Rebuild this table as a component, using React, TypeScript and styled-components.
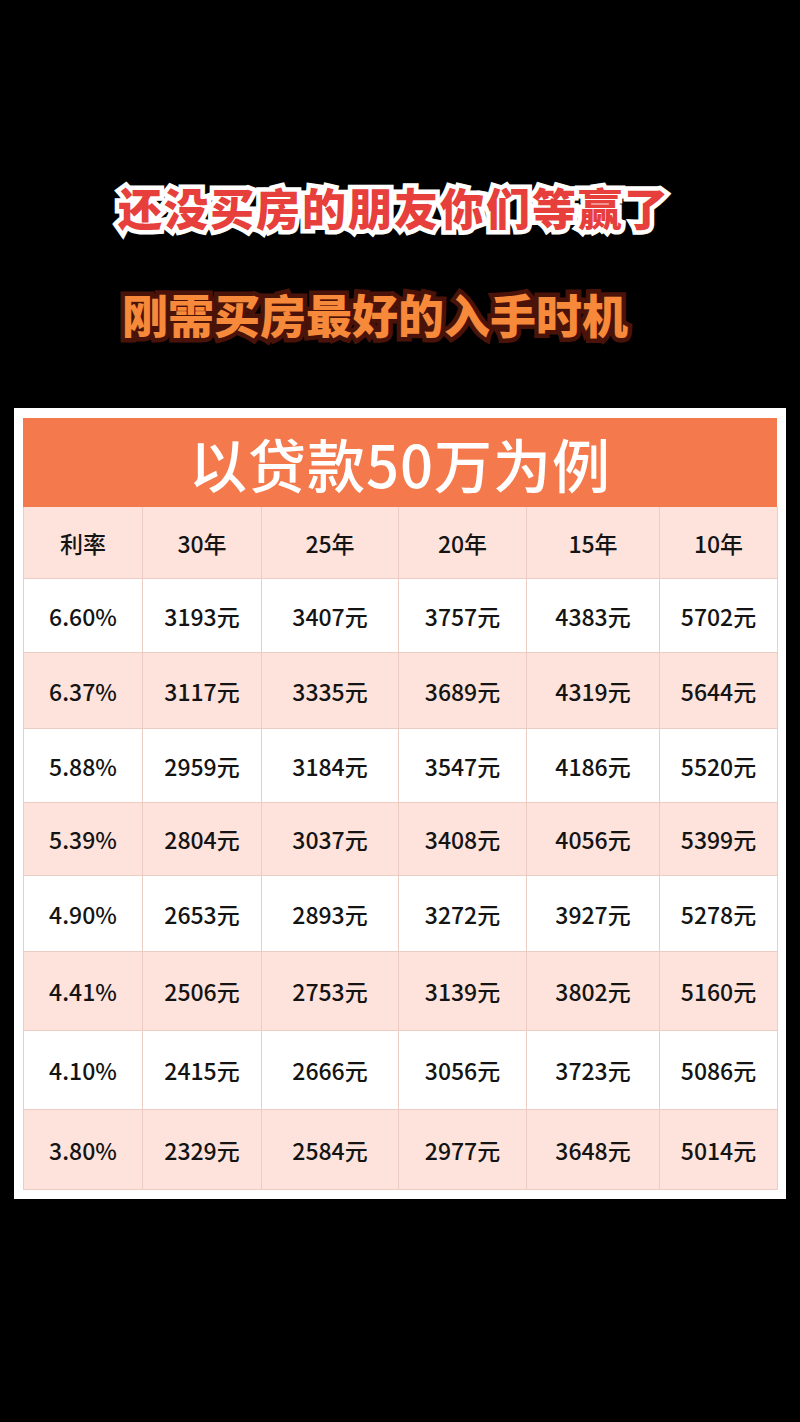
import React from 'react';
import styled, { createGlobalStyle } from 'styled-components';

const GlobalStyle = createGlobalStyle`
  html, body {
    margin: 0;
    padding: 0;
    background: #000;
  }
  body {
    font-family: "Noto Sans CJK SC", "Noto Sans", sans-serif;
  }
`;

const Page = styled.div`
  width: 800px;
  height: 1422px;
  background: #000;
  display: flex;
  flex-direction: column;
`;

const Titles = styled.div`
  padding: 176px 0 0 118px;
  height: 408px;
  box-sizing: border-box;
  display: flex;
  flex-direction: column;
  gap: 44px;
`;

const Title = styled.div<{ $fill: string; $stroke: string; $size: number; $gap: number; $indent: number }>`
  font-size: ${(p) => p.$size}px;
  font-weight: 900;
  line-height: 62px;
  letter-spacing: ${(p) => p.$gap}px;
  padding-left: ${(p) => p.$indent}px;
  color: ${(p) => p.$fill};
  -webkit-text-stroke: 9px ${(p) => p.$stroke};
  paint-order: stroke fill;
  white-space: nowrap;
`;

const Panel = styled.div`
  margin: 0 14px;
  background: #fff;
  padding: 10px 9px 9px;
`;

const Banner = styled.div`
  height: 89px;
  background: #f47a4d;
  color: #fff;
  font-size: 58px;
  font-weight: 500;
  display: flex;
  align-items: center;
  justify-content: center;
  letter-spacing: 1px;
`;

const Grid = styled.div`
  display: grid;
  grid-template-columns: 119px 119px 137px 128px 133px 118px;
  border-left: 1px solid #ecccc3;
`;

const Cell = styled.div<{ $pink: boolean; $h: number }>`
  height: ${(p) => p.$h}px;
  box-sizing: border-box;
  background: ${(p) => (p.$pink ? '#fde3dc' : '#fff')};
  border-right: 1px solid #ecccc3;
  border-bottom: 1px solid #ecccc3;
  display: flex;
  align-items: center;
  justify-content: center;
  color: #141414;
  font-size: 23px;
  font-weight: 500;
`;

const head = ['利率', '30年', '25年', '20年', '15年', '10年'];

const rows: [string, number[]][] = [
  ['6.60%', [3193, 3407, 3757, 4383, 5702]],
  ['6.37%', [3117, 3335, 3689, 4319, 5644]],
  ['5.88%', [2959, 3184, 3547, 4186, 5520]],
  ['5.39%', [2804, 3037, 3408, 4056, 5399]],
  ['4.90%', [2653, 2893, 3272, 3927, 5278]],
  ['4.41%', [2506, 2753, 3139, 3802, 5160]],
  ['4.10%', [2415, 2666, 3056, 3723, 5086]],
  ['3.80%', [2329, 2584, 2977, 3648, 5014]],
];

const rowHeights = [74, 76, 74, 73, 76, 79, 79, 80];

const App: React.FC = () => {
  return (
    <Page>
      <GlobalStyle />
      <Titles>
        <Title $fill="#e63f3c" $stroke="#fff" $size={44} $gap={2} $indent={0}>
          还没买房的朋友你们等赢了
        </Title>
        <Title $fill="#f6893a" $stroke="#4a1309" $size={46} $gap={0} $indent={4}>
          刚需买房最好的入手时机
        </Title>
      </Titles>
      <Panel>
        <Banner>以贷款50万为例</Banner>
        <Grid>
          {head.map((h) => (
            <Cell key={h} $pink $h={72}>
              {h}
            </Cell>
          ))}
          {rows.map(([rate, vals], i) => (
            <React.Fragment key={rate}>
              <Cell $pink={i % 2 === 1} $h={rowHeights[i]}>
                {rate}
              </Cell>
              {vals.map((v, j) => (
                <Cell key={j} $pink={i % 2 === 1} $h={rowHeights[i]}>
                  {v}元
                </Cell>
              ))}
            </React.Fragment>
          ))}
        </Grid>
      </Panel>
    </Page>
  );
};

export default App;
